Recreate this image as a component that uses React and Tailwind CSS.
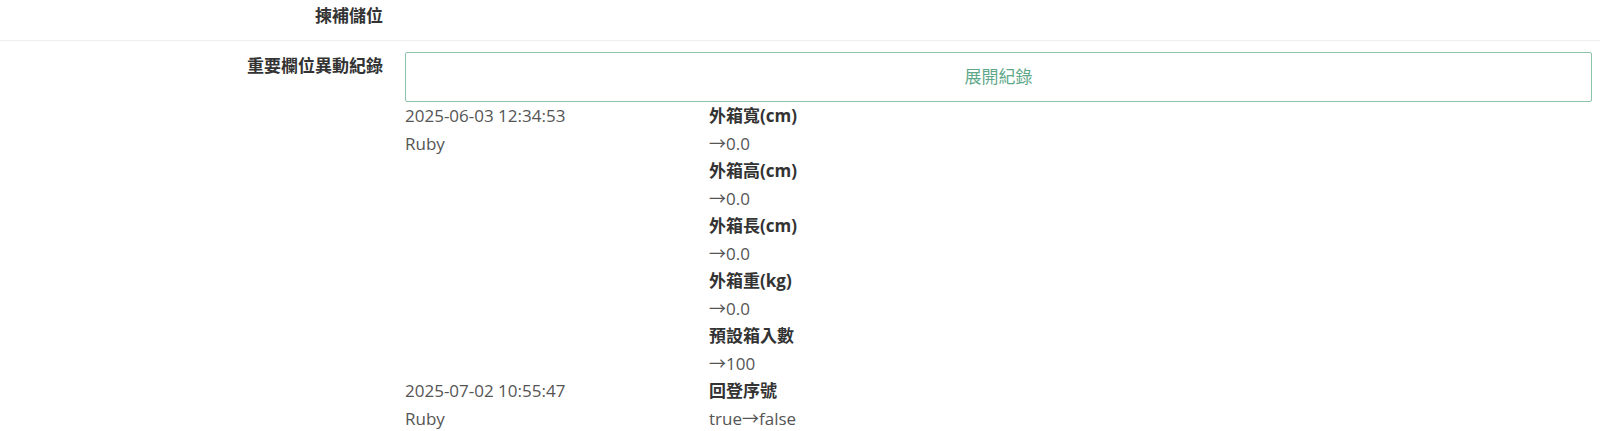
export default function App() {
  const font = { fontFamily: '"Open Sans", "Noto Sans CJK TC", sans-serif' };
  const logs = [
    {
      time: "2025-06-03 12:34:53",
      user: "Ruby",
      changes: [
        ["外箱寬(cm)", "→0.0"],
        ["外箱高(cm)", "→0.0"],
        ["外箱長(cm)", "→0.0"],
        ["外箱重(kg)", "→0.0"],
        ["預設箱入數", "→100"],
      ],
    },
    {
      time: "2025-07-02 10:55:47",
      user: "Ruby",
      changes: [["回登序號", "true→false"]],
    },
  ];
  return (
    <div className="w-[1600px] h-[431px] overflow-hidden bg-white text-[17px] leading-[27.5px] text-[#555]" style={font}>
      <div className="flex h-[41px] border-b border-[#eeeeee] pt-[1.5px]">
        <div className="w-[383px] text-right font-bold text-[#333]">揀補儲位</div>
      </div>
      <div className="flex pt-[11px] gap-[22px]">
        <div className="w-[383px] shrink-0 text-right font-bold text-[#333]">重要欄位異動紀錄</div>
        <div className="w-[1187px]">
          <div className="h-[50px] border border-[#8cc3a9] rounded-[2px] flex items-center justify-center text-[#5fa98b]">
            展開紀錄
          </div>
          {logs.map((log, i) => (
            <div key={i} className="flex">
              <div className="w-[304px] shrink-0">
                <div>{log.time}</div>
                <div>{log.user}</div>
              </div>
              <div>
                {log.changes.map(([k, v], j) => (
                  <div key={j}>
                    <div className="font-bold text-[#333]">{k}</div>
                    <div>{v}</div>
                  </div>
                ))}
              </div>
            </div>
          ))}
        </div>
      </div>
    </div>
  );
}
